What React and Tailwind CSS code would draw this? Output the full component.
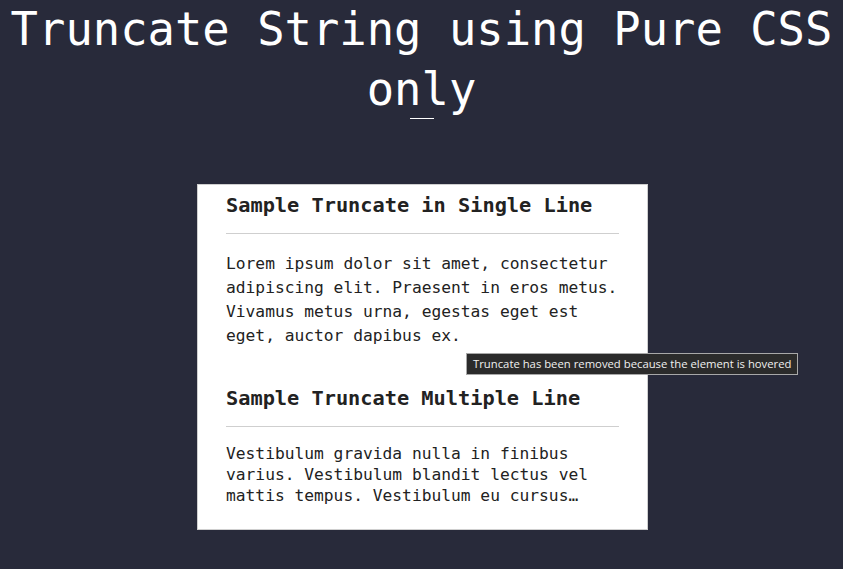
const mono = { fontFamily: '"DejaVu Sans Mono", "Liberation Mono", monospace' };

function Section({ title, children, className = '' }) {
  return (
    <section className={className}>
      <h2 className="text-[20.3px] leading-[30px] font-bold text-[#222]">{title}</h2>
      <hr className="mt-[13px] border-0 h-px bg-[#cfcfcf]" />
      {children}
    </section>
  );
}

export default function App() {
  return (
    <div
      className="relative min-h-screen bg-[#282a3a] pb-10 font-['DejaVu_Sans_Mono','Liberation_Mono',monospace]"
      style={mono}
    >
      <h1 className="text-center text-white text-[45.5px] leading-[60px] font-normal">
        Truncate String using Pure CSS only
      </h1>
      <div className="mx-auto -mt-[2px] w-6 h-px bg-white" />

      <div className="mx-auto mt-[65px] w-[451px] translate-x-px bg-white border border-[#cfcfcf] px-7 pt-[5px] pb-[23px]">
        <Section title="Sample Truncate in Single Line">
          <p
            className="mt-[18px] text-[16.25px] leading-6 text-[#222]"
            title="Truncate has been removed because the element is hovered"
          >
            Lorem ipsum dolor sit amet, consectetur adipiscing elit. Praesent in eros metus.
            Vivamus metus urna, egestas eget est eget, auctor dapibus ex.
          </p>
        </Section>

        <Section title="Sample Truncate Multiple Line" className="mt-[35px]">
          <p className="mt-4 text-[16.25px] leading-[21px] text-[#222] line-clamp-3">
            Vestibulum gravida nulla in finibus varius. Vestibulum blandit lectus vel mattis
            tempus. Vestibulum eu cursus tortor, sed ultricies lorem. Nam feugiat orci vitae
            ligula tincidunt, at posuere nisi porta.
          </p>
        </Section>
      </div>

      {/* native title tooltip shown over the hovered paragraph */}
      <div className="absolute left-[466px] top-[353px] h-[22px] flex items-center px-[6px] bg-[#2b2b2b] border border-[#a8a8a8] text-[#f0f0f0] text-[11.3px] font-['Open_Sans',sans-serif] whitespace-nowrap">
        Truncate has been removed because the element is hovered
      </div>
    </div>
  );
}
